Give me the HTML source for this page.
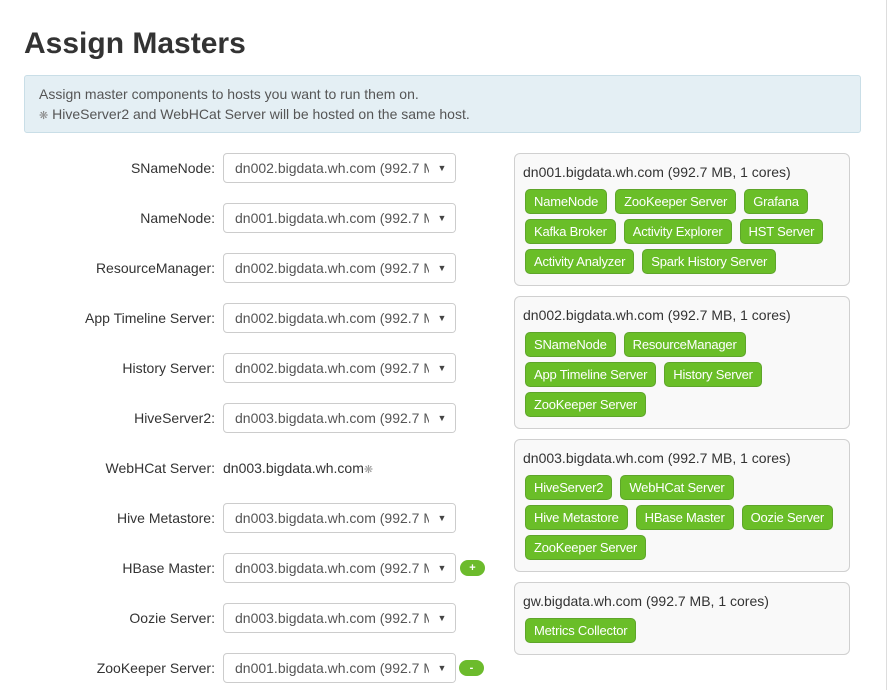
<!DOCTYPE html>
<html><head><meta charset="utf-8"><style>
*{box-sizing:border-box}
body{margin:0;width:889px;height:690px;overflow:hidden;background:#fff;font-family:"Liberation Sans",Arial,sans-serif;color:#333;position:relative}
h1{position:absolute;left:24px;top:26px;margin:0;font-size:30px;font-weight:bold;color:#333;line-height:36px}
.alert{position:absolute;left:24px;top:75px;width:837px;height:58px;background:#e4eff4;border:1px solid #c9dee7;border-radius:3px;padding:8px 14px;font-size:14px;line-height:20px;color:#555}
.vline{position:absolute;left:886px;top:0;width:1px;height:690px;background:#ddd}
.lbl{position:absolute;right:674px;font-size:14px;color:#333;line-height:20px}
.sel{position:absolute;left:223px;width:233px;height:30px;border:1px solid #ccc;border-radius:4px;font-size:14px;line-height:28px;padding-left:11px;color:#555;white-space:nowrap;overflow:hidden}
.sel span{position:absolute;right:0;top:0;width:26px;height:28px;background:#fff;font-size:9px;text-align:center;color:#444}
.sel i{position:absolute;left:212px;top:8px;width:2px;height:12px;background:#888}
.btn{position:absolute;left:460px;width:25px;height:16px;background:#6cbb2c;border-radius:8px;color:#fff;font-size:11px;line-height:16px;text-align:center;font-weight:bold}
.panel{position:absolute;left:514px;width:336px;background:#f9f9f9;border:1px solid #d0d0d0;border-radius:6px;padding:9px 8px 0 8px}
.panel .t{font-size:14px;color:#333;line-height:18px;margin-bottom:8px}
.b{display:inline-block;height:25px;line-height:23px;padding:0 8px;margin:0 6px 5px 2px;background:#6abe28;border:1px solid #5ea52a;border-radius:5px;color:#fff;font-size:13px;letter-spacing:-0.2px;white-space:nowrap}
.row{white-space:nowrap}
</style></head><body>
<div class="vline"></div>
<h1>Assign Masters</h1>
<div class="alert">Assign master components to hosts you want to run them on.<br><span style="color:#888;font-size:11px">&#10059;</span> HiveServer2 and WebHCat Server will be hosted on the same host.</div>

<div class="lbl" style="top:158px">SNameNode:</div><div class="sel" style="top:153px">dn002.bigdata.wh.com (992.7 M<i></i><span>▼</span></div>
<div class="lbl" style="top:208px">NameNode:</div><div class="sel" style="top:203px">dn001.bigdata.wh.com (992.7 M<i></i><span>▼</span></div>
<div class="lbl" style="top:258px">ResourceManager:</div><div class="sel" style="top:253px">dn002.bigdata.wh.com (992.7 M<i></i><span>▼</span></div>
<div class="lbl" style="top:308px">App Timeline Server:</div><div class="sel" style="top:303px">dn002.bigdata.wh.com (992.7 M<i></i><span>▼</span></div>
<div class="lbl" style="top:358px">History Server:</div><div class="sel" style="top:353px">dn002.bigdata.wh.com (992.7 M<i></i><span>▼</span></div>
<div class="lbl" style="top:408px">HiveServer2:</div><div class="sel" style="top:403px">dn003.bigdata.wh.com (992.7 M<i></i><span>▼</span></div>
<div class="lbl" style="top:458px">WebHCat Server:</div><div style="position:absolute;left:223px;top:458px;font-size:14px;line-height:20px">dn003.bigdata.wh.com<span style="color:#999;font-size:11px">&#10059;</span></div>
<div class="lbl" style="top:508px">Hive Metastore:</div><div class="sel" style="top:503px">dn003.bigdata.wh.com (992.7 M<i></i><span>▼</span></div>
<div class="lbl" style="top:558px">HBase Master:</div><div class="sel" style="top:553px">dn003.bigdata.wh.com (992.7 M<i></i><span>▼</span></div><div class="btn" style="top:560px">+</div>
<div class="lbl" style="top:608px">Oozie Server:</div><div class="sel" style="top:603px">dn003.bigdata.wh.com (992.7 M<i></i><span>▼</span></div>
<div class="lbl" style="top:658px">ZooKeeper Server:</div><div class="sel" style="top:653px">dn001.bigdata.wh.com (992.7 M<i></i><span>▼</span></div><div class="btn" style="top:660px;left:459px">-</div>

<div class="panel" style="top:153px;height:133px">
<div class="t">dn001.bigdata.wh.com (992.7 MB, 1 cores)</div>
<div class="row"><span class="b">NameNode</span><span class="b">ZooKeeper Server</span><span class="b">Grafana</span></div>
<div class="row"><span class="b">Kafka Broker</span><span class="b">Activity Explorer</span><span class="b">HST Server</span></div>
<div class="row"><span class="b">Activity Analyzer</span><span class="b">Spark History Server</span></div>
</div>
<div class="panel" style="top:296px;height:133px">
<div class="t">dn002.bigdata.wh.com (992.7 MB, 1 cores)</div>
<div class="row"><span class="b">SNameNode</span><span class="b">ResourceManager</span></div>
<div class="row"><span class="b">App Timeline Server</span><span class="b">History Server</span></div>
<div class="row"><span class="b">ZooKeeper Server</span></div>
</div>
<div class="panel" style="top:439px;height:133px">
<div class="t">dn003.bigdata.wh.com (992.7 MB, 1 cores)</div>
<div class="row"><span class="b">HiveServer2</span><span class="b">WebHCat Server</span></div>
<div class="row"><span class="b">Hive Metastore</span><span class="b">HBase Master</span><span class="b">Oozie Server</span></div>
<div class="row"><span class="b">ZooKeeper Server</span></div>
</div>
<div class="panel" style="top:582px;height:73px">
<div class="t">gw.bigdata.wh.com (992.7 MB, 1 cores)</div>
<div class="row"><span class="b">Metrics Collector</span></div>
</div>
</body></html>
